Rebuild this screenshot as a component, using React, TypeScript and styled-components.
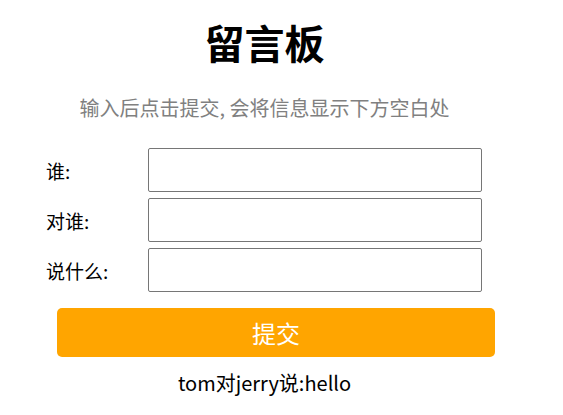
import React, { useState } from "react";
import styled, { createGlobalStyle } from "styled-components";

const GlobalStyle = createGlobalStyle`
  body {
    margin: 8px;
    background: #ffffff;
    font-family: "Noto Sans CJK SC", "Noto Sans", sans-serif;
    color: #000000;
  }
`;

const Board = styled.div`
  width: 513px;
`;

const Title = styled.h1`
  margin: 5px 0 0;
  font-size: 40px;
  line-height: 58px;
  font-weight: 700;
  text-align: center;
`;

const Hint = styled.p`
  margin: 22px 0 25px;
  font-size: 20px;
  line-height: 30px;
  color: #808080;
  text-align: center;
`;

const Form = styled.form`
  display: flex;
  flex-direction: column;
  gap: 6px;
  padding-left: 38px;
`;

const Row = styled.div`
  display: flex;
  align-items: center;
`;

const Label = styled.label`
  width: 102px;
  font-size: 19px;
`;

const Input = styled.input`
  width: 334px;
  height: 44px;
  box-sizing: border-box;
  border: 1px solid #767676;
  border-radius: 2px;
  padding: 0 8px;
  font-size: 16px;
  font-family: inherit;
`;

const SubmitButton = styled.button`
  width: 438px;
  height: 49px;
  margin: 10px 0 0 11px;
  border: none;
  border-radius: 5px;
  background: #ffa500;
  color: #ffffff;
  font-size: 24px;
  font-family: inherit;
  cursor: pointer;
`;

const Message = styled.p`
  margin: 6px 0 0;
  font-size: 20px;
  line-height: 40px;
  text-align: center;
`;

const fields = [
  { key: "from", label: "谁:" },
  { key: "to", label: "对谁:" },
  { key: "text", label: "说什么:" },
];

export default function App() {
  const [messages] = useState(["tom对jerry说:hello"]);

  return (
    <>
      <GlobalStyle />
      <Board>
        <Title>留言板</Title>
        <Hint>输入后点击提交, 会将信息显示下方空白处</Hint>
        <Form onSubmit={(e) => e.preventDefault()}>
          {fields.map((f) => (
            <Row key={f.key}>
              <Label htmlFor={f.key}>{f.label}</Label>
              <Input id={f.key} type="text" />
            </Row>
          ))}
          <SubmitButton type="submit">提交</SubmitButton>
        </Form>
        {messages.map((m, i) => (
          <Message key={i}>{m}</Message>
        ))}
      </Board>
    </>
  );
}
